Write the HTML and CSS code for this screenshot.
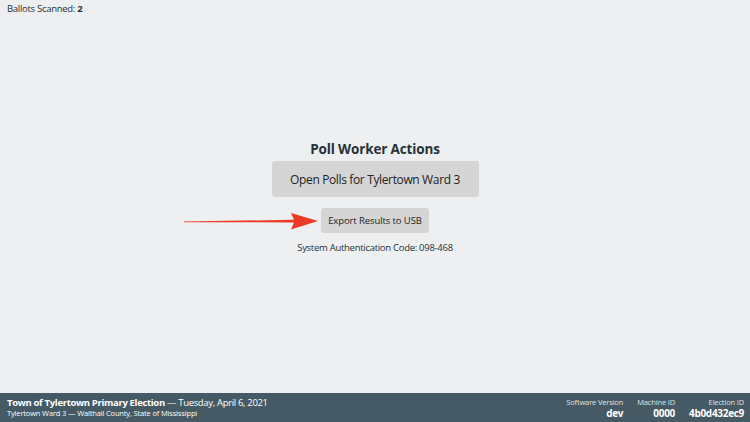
FILE: index.html
```html
<!DOCTYPE html>
<html lang="en">
<head>
<meta charset="utf-8">
<title>Poll Worker Actions</title>
<link rel="stylesheet" href="styles.css">
</head>
<body>
<div class="screen">
  <main class="main">
    <div class="ballots">Ballots Scanned: <strong>2</strong></div>
    <section class="actions">
      <h1 class="title">Poll Worker Actions</h1>
      <button class="btn btn-large">Open Polls for Tylertown Ward 3</button>
      <div class="export-row">
        <svg class="arrow" width="140" height="22" viewBox="0 0 140 22" aria-hidden="true">
          <path d="M0 11.4 L110 9.8 L107 3 L134 11 L107 19.5 L110 12.4 L0 12.2 Z" fill="#ec3a26"/>
        </svg>
        <button class="btn btn-small">Export Results to USB</button>
      </div>
      <p class="auth">System Authentication Code: 098-468</p>
    </section>
  </main>
  <footer class="footer">
    <div class="election">
      <div class="election-title"><strong>Town of Tylertown Primary Election</strong> — Tuesday, April 6, 2021</div>
      <div class="election-sub">Tylertown Ward 3 — Walthall County, State of Mississippi</div>
    </div>
    <div class="meta">
      <div class="meta-item"><div class="meta-label">Software Version</div><div class="meta-value">dev</div></div>
      <div class="meta-item"><div class="meta-label">Machine ID</div><div class="meta-value">0000</div></div>
      <div class="meta-item"><div class="meta-label">Election ID</div><div class="meta-value">4b0d432ec9</div></div>
    </div>
  </footer>
</div>
</body>
</html>
```
FILE: styles.css
```css
* { box-sizing: border-box; }
html, body { margin: 0; padding: 0; }
body {
  font-family: "Open Sans", "Noto Sans", sans-serif;
  background: #edeff0;
  color: #263238;
}
.screen {
  display: flex;
  flex-direction: column;
  height: 422px;
  width: 750px;
}
.main {
  position: relative;
  flex: 1;
  display: flex;
  align-items: center;
  justify-content: center;
}
.ballots {
  position: absolute;
  top: 2px;
  left: 7px;
  font-size: 9.5px;
  letter-spacing: -0.03em;
  line-height: 14px;
}
.actions {
  display: flex;
  flex-direction: column;
  align-items: center;
}
.title {
  margin: 0 0 3px;
  padding-top: 2px;
  font-size: 13.5px;
  line-height: 18px;
  font-weight: 700;
  letter-spacing: -0.01em;
}
.btn {
  border: none;
  background: #d5d5d5;
  color: #222;
  font-family: inherit;
  border-radius: 3px;
  padding: 0;
}
.btn-large {
  width: 207px;
  height: 36px;
  font-size: 12px;
  letter-spacing: -0.03em;
}
.export-row {
  position: relative;
  margin-top: 10px;
}
.btn-small {
  width: 108px;
  height: 25px;
  font-size: 9.5px;
  letter-spacing: -0.01em;
}
.arrow {
  position: absolute;
  right: 105px;
  top: 3px;
}
.auth {
  margin: 8px 0 0;
  font-size: 9.5px;
  letter-spacing: -0.03em;
  line-height: 14px;
}
.footer {
  height: 29px;
  background: #455a64;
  color: #fff;
  display: flex;
  justify-content: space-between;
  align-items: center;
  padding: 0 6px 0 7px;
}
.election-title {
  font-size: 9.5px;
  letter-spacing: -0.035em;
  line-height: 12px;
}
.election-sub {
  font-size: 7.5px;
  letter-spacing: -0.02em;
  line-height: 9px;
}
.meta {
  display: flex;
  gap: 14px;
}
.meta-item { text-align: right; }
.meta-label {
  font-size: 7.5px;
  letter-spacing: -0.02em;
  line-height: 10px;
  color: #dfe4e6;
}
.meta-value {
  font-size: 10px;
  letter-spacing: -0.03em;
  line-height: 12px;
  font-weight: 700;
}
```
